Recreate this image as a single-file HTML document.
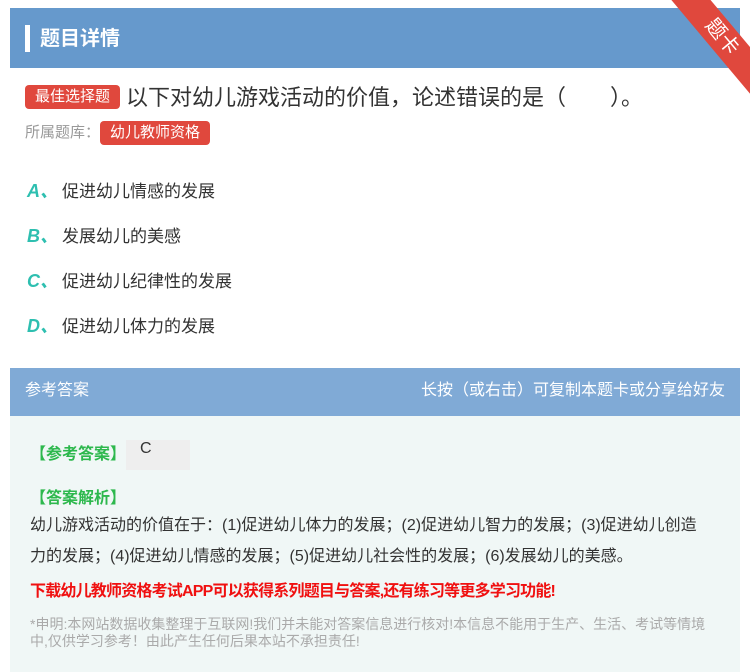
<!DOCTYPE html>
<html><head><meta charset="utf-8"><style>
*{margin:0;padding:0;box-sizing:border-box}
body{width:750px;height:672px;overflow:hidden;background:#fff;font-family:"Liberation Sans","Noto Sans CJK SC",sans-serif;position:relative}
.hd{position:absolute;left:10px;top:8px;width:730px;height:60px;background:#6699cc}
.hd .bar{position:absolute;left:15px;top:17px;width:5px;height:27px;background:#fff}
.hd .t{position:absolute;left:30px;top:14px;color:#fff;font-size:20px;font-weight:bold}
.rib{position:absolute;width:140px;height:30px;background:#e0483d;transform:rotate(50deg);transform-origin:center;color:#fff;font-size:20px;text-align:center;line-height:30px;right:-42px;top:22px}
.tag{display:inline-block;background:#e0483d;color:#fff;border-radius:4px;font-size:15px;padding:0 10px;height:24px;line-height:24px}
.q{position:absolute;left:25px;top:80px;font-size:22px;color:#333;white-space:nowrap}
.q .tag{vertical-align:4px;margin-right:6px}
.lib{position:absolute;left:25px;top:121px;font-size:15px;color:#999}
.opt{position:absolute;left:27px;font-size:17px;color:#333}
.opt b{color:#2ebfb0;font-style:italic;font-size:18px;margin-right:4px}
.ah{position:absolute;left:10px;top:368px;width:730px;height:48px;background:#80aad6;color:#fff;font-size:16px;line-height:46px;padding:0 15px}
.ah span{float:right}
.ab{position:absolute;left:10px;top:416px;width:730px;height:256px;background:#f0f7f6}
.g{color:#2db84d;font-weight:bold;font-size:16px;position:absolute;left:30px}
.tx{position:absolute;left:30px;top:510px;width:680px;font-size:16px;color:#333;line-height:31px}
.red{position:absolute;left:30px;top:577px;font-size:16px;color:#f01010;font-weight:bold;letter-spacing:-0.8px}
.dec{position:absolute;left:30px;top:616px;width:690px;font-size:14px;color:#aaa;line-height:17px}
</style></head><body>
<div class="hd"><div class="bar"></div><div class="t">题目详情</div></div>
<div class="rib">题卡</div>
<div class="q"><span class="tag">最佳选择题</span>以下对幼儿游戏活动的价值，论述错误的是（　　）。</div>
<div class="lib">所属题库：<span class="tag" style="color:#fff">幼儿教师资格</span></div>
<div class="opt" style="top:177px"><b>A、</b>促进幼儿情感的发展</div>
<div class="opt" style="top:222px"><b>B、</b>发展幼儿的美感</div>
<div class="opt" style="top:267px"><b>C、</b>促进幼儿纪律性的发展</div>
<div class="opt" style="top:312px"><b>D、</b>促进幼儿体力的发展</div>
<div class="ah">参考答案<span>长按（或右击）可复制本题卡或分享给好友</span></div>
<div class="ab"></div>
<div class="g" style="top:440px">【参考答案】<span style="display:inline-block;width:64px;height:30px;background:#eee;color:#333;font-weight:normal;vertical-align:middle;padding-left:14px">C</span></div>
<div class="g" style="top:484px">【答案解析】</div>
<div class="tx">幼儿游戏活动的价值在于：(1)促进幼儿体力的发展；(2)促进幼儿智力的发展；(3)促进幼儿创造力的发展；(4)促进幼儿情感的发展；(5)促进幼儿社会性的发展；(6)发展幼儿的美感。</div>
<div class="red">下载幼儿教师资格考试APP可以获得系列题目与答案,还有练习等更多学习功能!</div>
<div class="dec">*申明:本网站数据收集整理于互联网!我们并未能对答案信息进行核对!本信息不能用于生产、生活、考试等情境中,仅供学习参考！由此产生任何后果本站不承担责任!</div>
</body></html>
